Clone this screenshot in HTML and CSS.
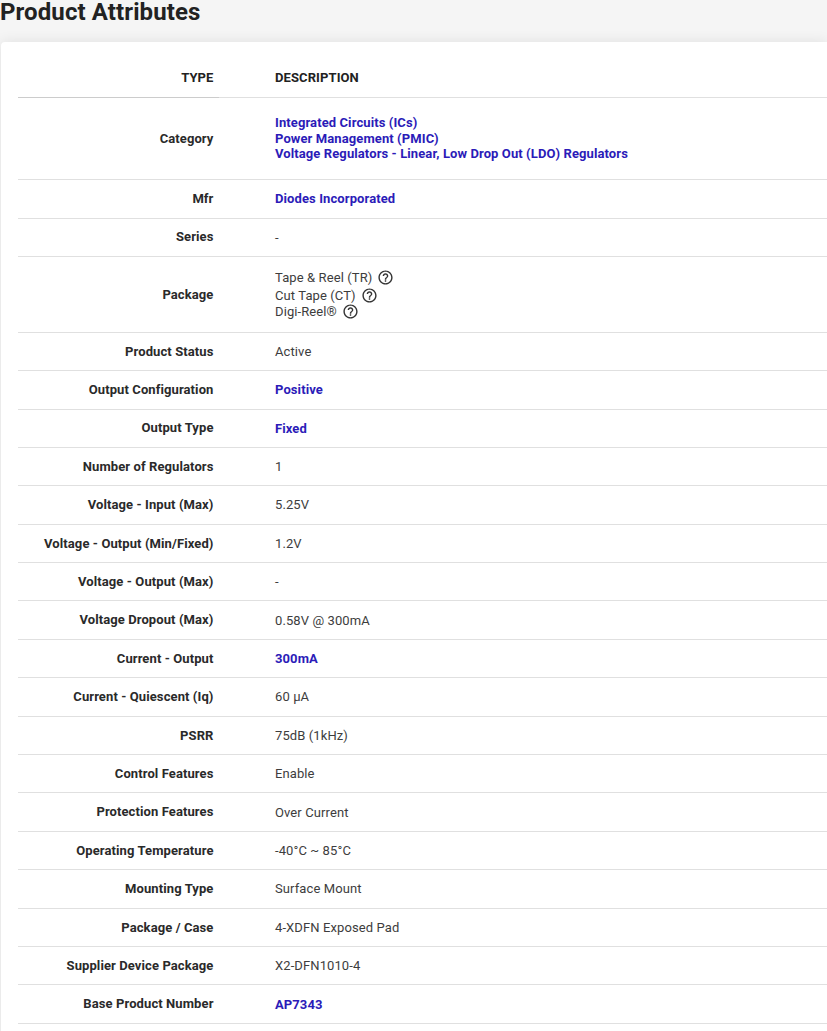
FILE: index.html
```html
<!DOCTYPE html>
<html lang="en">
<head>
<meta charset="utf-8">
<title>Product Attributes</title>
<link rel="stylesheet" href="styles.css">
</head>
<body>
<h2 class="title">Product Attributes</h2>
<section class="card">
  <div class="row head"><div class="type">TYPE</div><div class="desc">DESCRIPTION</div></div>
  <div class="row cat"><div class="type">Category</div><div class="desc stack-links">
    <a href="#">Integrated Circuits (ICs)</a><a href="#">Power Management (PMIC)</a><a href="#">Voltage Regulators - Linear, Low Drop Out (LDO) Regulators</a></div></div>
  <div class="row"><div class="type">Mfr</div><div class="desc"><a href="#">Diodes Incorporated</a></div></div>
  <div class="row"><div class="type">Series</div><div class="desc">-</div></div>
  <div class="row pack"><div class="type">Package</div><div class="desc stack-pack">
    <div class="pack-item">Tape &amp; Reel (TR)<svg class="help" viewBox="0 0 24 24"><path d="M11 18h2v-2h-2v2zm1-16C6.48 2 2 6.48 2 12s4.48 10 10 10 10-4.48 10-10S17.52 2 12 2zm0 18c-4.41 0-8-3.59-8-8s3.59-8 8-8 8 3.59 8 8-3.59 8-8 8zm0-14c-2.21 0-4 1.79-4 4h2c0-1.1.9-2 2-2s2 .9 2 2c0 2-3 1.75-3 5h2c0-2.25 3-2.5 3-5 0-2.21-1.79-4-4-4z"/></svg></div>
    <div class="pack-item">Cut Tape (CT)<svg class="help" viewBox="0 0 24 24"><path d="M11 18h2v-2h-2v2zm1-16C6.48 2 2 6.48 2 12s4.48 10 10 10 10-4.48 10-10S17.52 2 12 2zm0 18c-4.41 0-8-3.59-8-8s3.59-8 8-8 8 3.59 8 8-3.59 8-8 8zm0-14c-2.21 0-4 1.79-4 4h2c0-1.1.9-2 2-2s2 .9 2 2c0 2-3 1.75-3 5h2c0-2.25 3-2.5 3-5 0-2.21-1.79-4-4-4z"/></svg></div>
    <div class="pack-item">Digi-Reel®<svg class="help" viewBox="0 0 24 24"><path d="M11 18h2v-2h-2v2zm1-16C6.48 2 2 6.48 2 12s4.48 10 10 10 10-4.48 10-10S17.52 2 12 2zm0 18c-4.41 0-8-3.59-8-8s3.59-8 8-8 8 3.59 8 8-3.59 8-8 8zm0-14c-2.21 0-4 1.79-4 4h2c0-1.1.9-2 2-2s2 .9 2 2c0 2-3 1.75-3 5h2c0-2.25 3-2.5 3-5 0-2.21-1.79-4-4-4z"/></svg></div>
  </div></div>
  <div class="row"><div class="type">Product Status</div><div class="desc">Active</div></div>
  <div class="row"><div class="type">Output Configuration</div><div class="desc"><a href="#">Positive</a></div></div>
  <div class="row"><div class="type">Output Type</div><div class="desc"><a href="#">Fixed</a></div></div>
  <div class="row"><div class="type">Number of Regulators</div><div class="desc">1</div></div>
  <div class="row"><div class="type">Voltage - Input (Max)</div><div class="desc">5.25V</div></div>
  <div class="row"><div class="type">Voltage - Output (Min/Fixed)</div><div class="desc">1.2V</div></div>
  <div class="row"><div class="type">Voltage - Output (Max)</div><div class="desc">-</div></div>
  <div class="row"><div class="type">Voltage Dropout (Max)</div><div class="desc">0.58V @ 300mA</div></div>
  <div class="row"><div class="type">Current - Output</div><div class="desc"><a href="#">300mA</a></div></div>
  <div class="row"><div class="type">Current - Quiescent (Iq)</div><div class="desc">60 µA</div></div>
  <div class="row"><div class="type">PSRR</div><div class="desc">75dB (1kHz)</div></div>
  <div class="row"><div class="type">Control Features</div><div class="desc">Enable</div></div>
  <div class="row"><div class="type">Protection Features</div><div class="desc">Over Current</div></div>
  <div class="row"><div class="type">Operating Temperature</div><div class="desc">-40°C ~ 85°C</div></div>
  <div class="row"><div class="type">Mounting Type</div><div class="desc">Surface Mount</div></div>
  <div class="row"><div class="type">Package / Case</div><div class="desc">4-XDFN Exposed Pad</div></div>
  <div class="row"><div class="type">Supplier Device Package</div><div class="desc">X2-DFN1010-4</div></div>
  <div class="row"><div class="type">Base Product Number</div><div class="desc"><a href="#">AP7343</a></div></div>
</section>
</body>
</html>
```
FILE: styles.css
```css
html, body { margin: 0; height: 100%; overflow: hidden; }
body {
  background: #f5f5f5;
  font-family: Roboto, sans-serif;
  font-size: 13px;
  letter-spacing: 0.1px;
  color: #3d3d3d;
}
.title {
  margin: 0;
  height: 42px;
  font-size: 24px;
  line-height: 25px;
  font-weight: 700;
  letter-spacing: 0.1px;
  color: #222;
}
.card {
  margin-left: 1px;
  background: #fff;
  border-radius: 4px 0 0 0;
  padding: 0 0 40px 17px;
  box-shadow: 0 0 14px rgba(0,0,0,.09);
}
.row {
  display: flex;
  align-items: center;
  height: 38.4px;
  border-bottom: 1px solid #e0e0e0;
  box-sizing: border-box;
}
.head {
  height: 56px;
  align-items: flex-end;
  padding-bottom: 13px;
  border-bottom: 0;
  background:
    linear-gradient(#ccc, #ccc) 0 100% / 201px 1px no-repeat,
    linear-gradient(#e0e0e0, #e0e0e0) 0 100% / 100% 1px no-repeat;
}
.head .type, .head .desc { font-weight: 700; color: #222; line-height: 15px; }
.cat { height: 82.17px; }
.pack { height: 75.8px; }
.type {
  width: 195.5px;
  flex: none;
  text-align: right;
  font-weight: 700;
  color: #2a2a2a;
  margin-bottom: 0.5px;
}
.head .type { margin-bottom: 0; }
.desc { margin-left: 61.5px; line-height: 17px; }
a { color: #2b1bb8; font-weight: 700; text-decoration: none; }
.stack-links a { display: block; line-height: 15.5px; }
.pack-item { display: flex; align-items: center; height: 17px; }
.pack-item:nth-child(2) { margin-top: 1px; margin-bottom: -1px; }
.help { width: 17px; height: 17px; margin-left: 5px; fill: #333; }
```
